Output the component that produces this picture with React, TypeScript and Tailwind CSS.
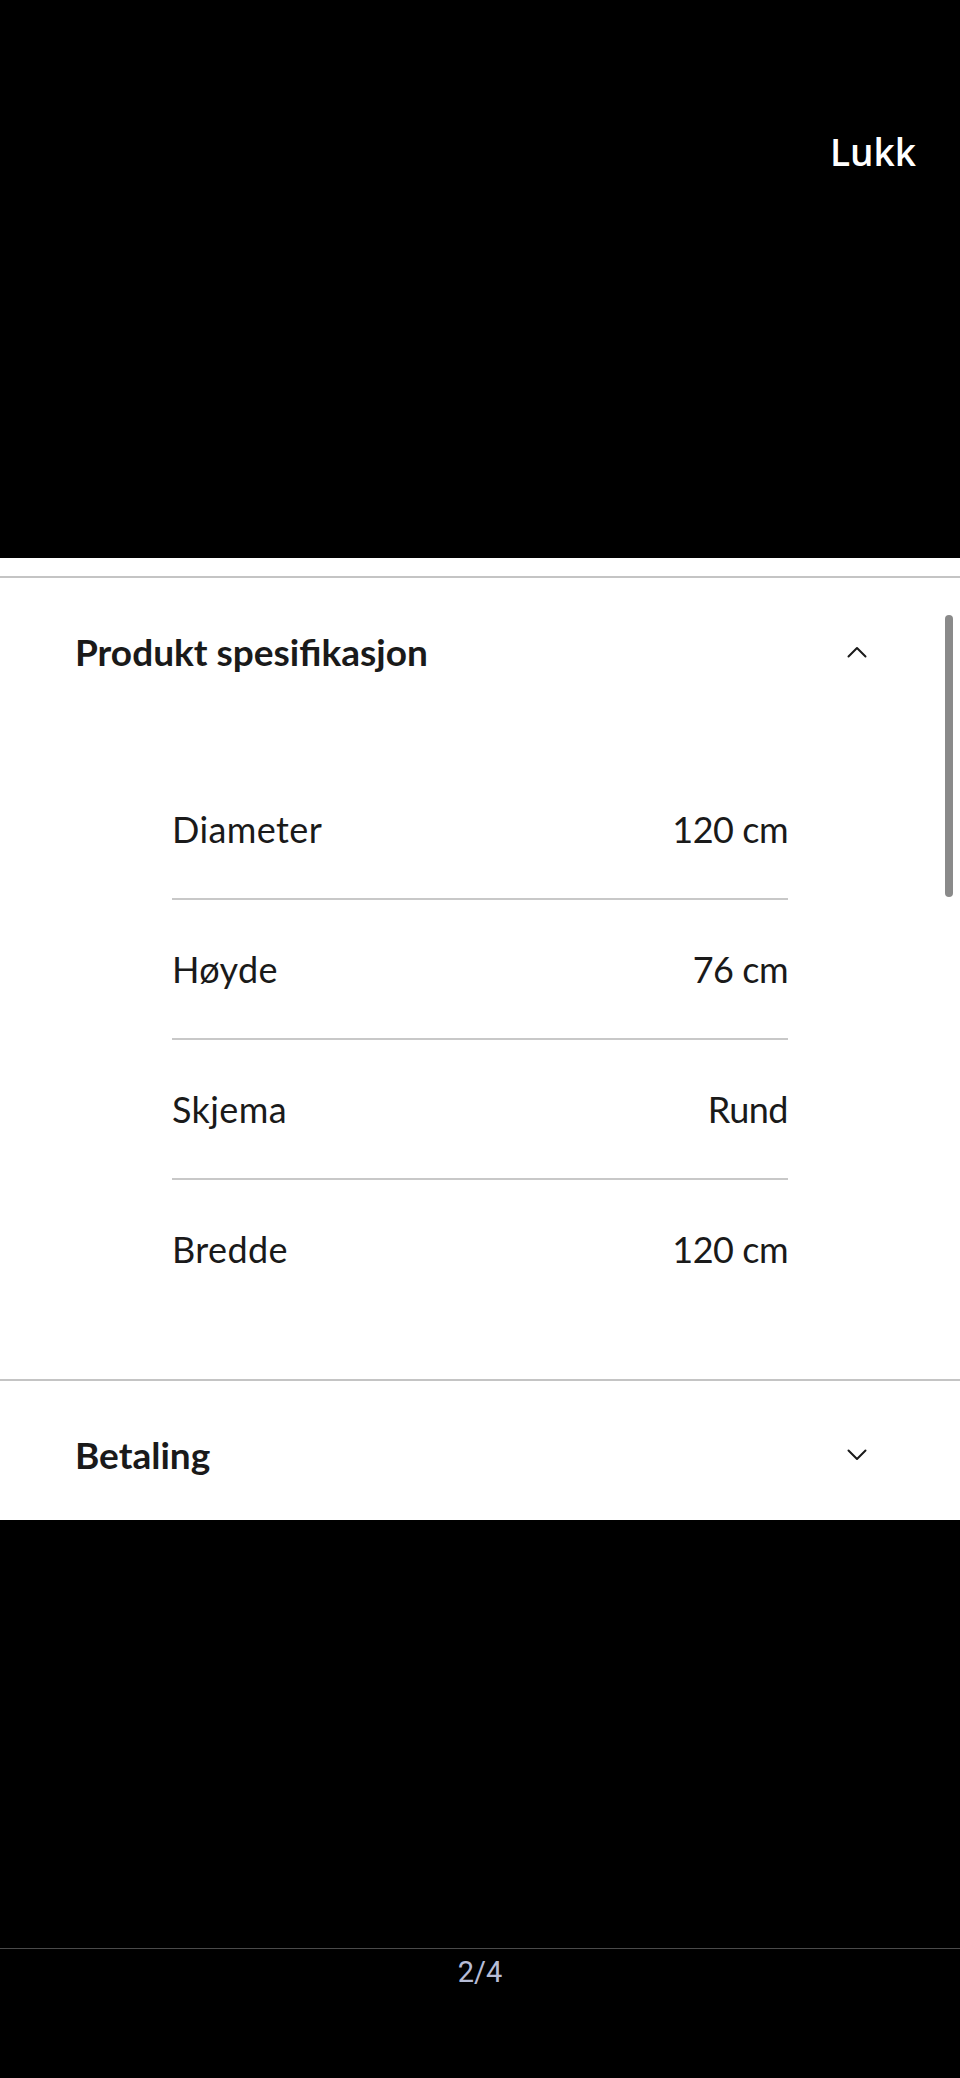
import React from 'react';

const specs = [
  { label: 'Diameter', value: '120 cm' },
  { label: 'Høyde', value: '76 cm' },
  { label: 'Skjema', value: 'Rund' },
  { label: 'Bredde', value: '120 cm' },
];

const Chevron: React.FC<{ up?: boolean }> = ({ up = false }) => (
  <svg width="20" height="12" viewBox="0 0 20 12" fill="none" className="shrink-0">
    <polyline
      points={up ? '1.5,10.5 10,2 18.5,10.5' : '1.5,1.5 10,10 18.5,1.5'}
      stroke="#1a1a1a"
      strokeWidth="2"
      strokeLinecap="round"
      strokeLinejoin="round"
    />
  </svg>
);

const App: React.FC = () => {
  return (
    <div className="w-[960px] h-[2078px] bg-black flex flex-col font-['Lato',sans-serif]">
      {/* top overlay */}
      <div className="h-[558px] flex justify-end items-start pt-[130px] pr-[44px]">
        <span className="text-white text-[37px] leading-[44px] font-semibold font-['Open_Sans',sans-serif]">
          Lukk
        </span>
      </div>

      {/* sheet */}
      <div className="relative bg-white">
        <div className="h-[18px]" />
        <div className="h-[2px] bg-[#c4c4c4]" />

        <div className="h-[148px] flex items-center justify-between pl-[75px] pr-[93px]">
          <span className="text-[37px] leading-[44px] font-bold text-[#1a1a1a]">Produkt spesifikasjon</span>
          <Chevron up />
        </div>

        <div className="pt-[34px] pb-[61px] ml-[172px] w-[616px]">
          {specs.map((s, i) => (
            <div key={s.label}>
              <div className="h-[138px] flex items-center justify-between text-[36px] leading-[44px] text-[#1a1a1a]">
                <span className="tracking-[0.4px]">{s.label}</span>
                <span className="tracking-[-0.5px]">{s.value}</span>
              </div>
              {i < specs.length - 1 && <div className="h-[2px] bg-[#c8c8c8]" />}
            </div>
          ))}
        </div>

        <div className="h-[2px] bg-[#c4c4c4]" />
        <div className="h-[139px] pt-[8px] flex items-center justify-between pl-[75px] pr-[93px]">
          <span className="text-[37px] leading-[44px] font-bold text-[#1a1a1a]">Betaling</span>
          <Chevron />
        </div>

        {/* scrollbar */}
        <div className="absolute left-[945px] top-[57px] w-[8px] h-[282px] rounded-full bg-[#8a8a8a]" />
      </div>

      {/* bottom */}
      <div className="flex-1 flex flex-col">
        <div className="h-[428px]" />
        <div className="h-px bg-[#4a4a4a]" />
        <div className="flex justify-center pt-[3px]">
          <span className="text-[29px] leading-[40px] text-[#b6bcd6] font-['Roboto',sans-serif]">2/4</span>
        </div>
      </div>
    </div>
  );
};

export default App;
